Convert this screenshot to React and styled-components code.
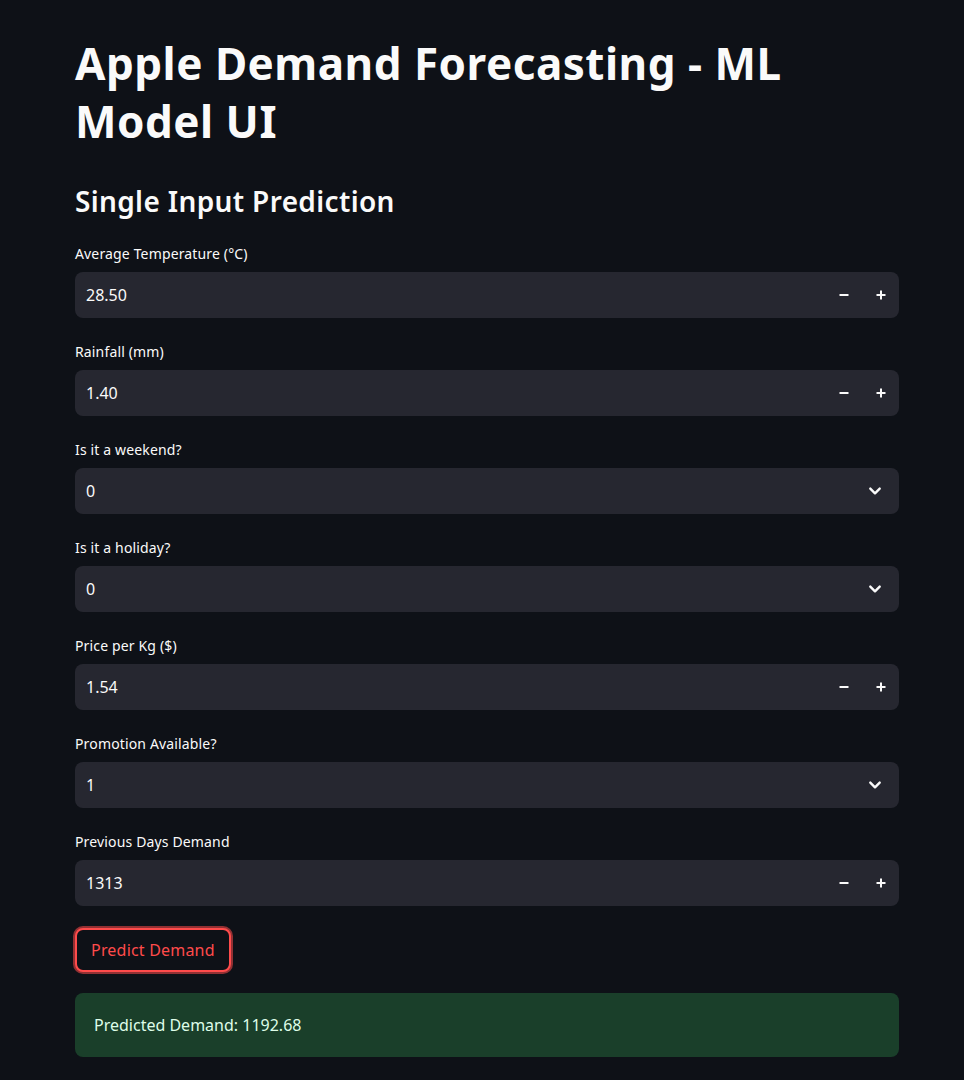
import styled, { createGlobalStyle } from "styled-components"

const GlobalStyle = createGlobalStyle`
  html, body {
    margin: 0;
    padding: 0;
    background: #0e1117;
  }
  body {
    font-family: "Noto Sans", "Open Sans", sans-serif;
    color: #fafafa;
  }
  * { box-sizing: border-box; }
`

const fields = [
  { label: "Average Temperature (°C)", kind: "number", value: "28.50" },
  { label: "Rainfall (mm)", kind: "number", value: "1.40" },
  { label: "Is it a weekend?", kind: "select", value: "0" },
  { label: "Is it a holiday?", kind: "select", value: "0" },
  { label: "Price per Kg ($)", kind: "number", value: "1.54" },
  { label: "Promotion Available?", kind: "select", value: "1" },
  { label: "Previous Days Demand", kind: "number", value: "1313" },
]

function Minus() {
  return (
    <svg width="12" height="12" viewBox="0 0 12 12">
      <path d="M1.5 6h9" stroke="#fafafa" strokeWidth="2" />
    </svg>
  )
}

function Plus() {
  return (
    <svg width="12" height="12" viewBox="0 0 12 12">
      <path d="M1.5 6h9M6 1.5v9" stroke="#fafafa" strokeWidth="2" />
    </svg>
  )
}

function Chevron() {
  return (
    <svg width="14" height="14" viewBox="0 0 14 14">
      <path d="M2.3 4.6 7 9.3l4.7-4.7" fill="none" stroke="#fafafa" strokeWidth="2.4" strokeLinecap="round" strokeLinejoin="round" />
    </svg>
  )
}

function Field({ label, kind, value }) {
  return (
    <FieldBox>
      <Label>{label}</Label>
      <InputRow>
        <Value>{value}</Value>
        {kind === "number" ? (
          <Steps>
            <StepButton><Minus /></StepButton>
            <StepButton><Plus /></StepButton>
          </Steps>
        ) : (
          <Arrow><Chevron /></Arrow>
        )}
      </InputRow>
    </FieldBox>
  )
}

export default function App() {
  return (
    <>
      <GlobalStyle />
      <Main>
        <Title>Apple Demand Forecasting - ML Model UI</Title>
        <Subheader>Single Input Prediction</Subheader>
        <Fields>
          {fields.map((f) => (
            <Field key={f.label} {...f} />
          ))}
        </Fields>
        <PredictButton>Predict Demand</PredictButton>
        <Success>Predicted Demand: 1192.68</Success>
      </Main>
    </>
  )
}

const Main = styled.main`
  width: 824px;
  margin-left: 75px;
  padding-top: 34px;
  padding-bottom: 40px;
`

const Title = styled.h1`
  margin: 0;
  max-width: 800px;
  font-size: 44px;
  font-weight: 700;
  line-height: 58px;
  letter-spacing: 0.5px;
`

const Subheader = styled.h3`
  margin: 31px 0 0;
  font-size: 28px;
  font-weight: 600;
  line-height: 40px;
  letter-spacing: 0.35px;
`

const Fields = styled.div`
  display: flex;
  flex-direction: column;
  gap: 24px;
  margin-top: 23px;
`

const FieldBox = styled.div`
  display: flex;
  flex-direction: column;
  gap: 8px;
`

const Label = styled.label`
  font-size: 14px;
  line-height: 20px;
  letter-spacing: 0.15px;
  color: #fafafa;
`

const InputRow = styled.div`
  display: flex;
  align-items: center;
  height: 46px;
  background: #262730;
  border-radius: 8px;
  overflow: hidden;
`

const Value = styled.div`
  flex: 1;
  padding-left: 11px;
  font-size: 16px;
  color: #fafafa;
`

const Steps = styled.div`
  display: flex;
  height: 100%;
`

const StepButton = styled.div`
  width: 37px;
  height: 100%;
  display: flex;
  align-items: center;
  justify-content: center;
`

const Arrow = styled.div`
  width: 48px;
  display: flex;
  align-items: center;
  justify-content: center;
`

const PredictButton = styled.button`
  display: block;
  margin-top: 22px;
  height: 44px;
  padding: 0 14px;
  background: #0e1117;
  border: 2px solid #ff4b4b;
  border-radius: 8px;
  box-shadow: 0 0 0 2px rgba(255, 75, 75, 0.55);
  color: #ff4b4b;
  font-family: inherit;
  font-size: 16px;
  letter-spacing: 0.2px;
`

const Success = styled.div`
  margin-top: 21px;
  height: 64px;
  display: flex;
  align-items: center;
  padding: 0 19px;
  background: #1a3f2a;
  border-radius: 8px;
  color: #dffde9;
  font-size: 16px;
`
